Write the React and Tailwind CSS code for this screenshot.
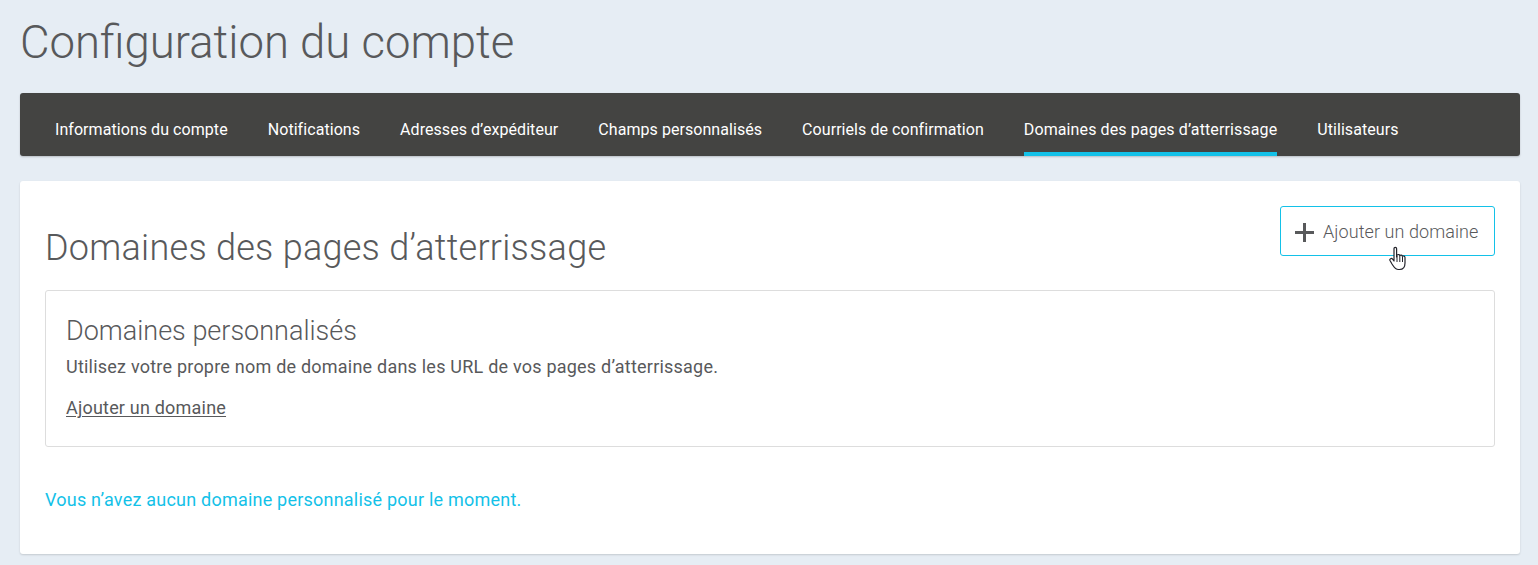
import React from "react";

const tabs = [
  "Informations du compte",
  "Notifications",
  "Adresses d’expéditeur",
  "Champs personnalisés",
  "Courriels de confirmation",
  "Domaines des pages d’atterrissage",
  "Utilisateurs",
];
const active = "Domaines des pages d’atterrissage";

export default function App() {
  return (
    <div className="h-[565px] overflow-hidden bg-[#e6edf4] pr-[18px] pl-5 font-['Roboto',sans-serif] text-[#58595b]">
      <h1 className="h-[93px] pt-[16px] text-[45.500px] leading-[54px] font-light">Configuration du compte</h1>
      <nav className="flex h-[63px] gap-[40px] rounded-[3px] bg-[#444442] px-[35px] shadow-[0_1px_2px_rgba(0,0,0,0.2)]">
        {tabs.map((t) => (
          <a
            key={t}
            className={
              "block h-[63px] pt-[27px] text-[16px] leading-[20px] whitespace-nowrap text-white " +
              (t === active ? "border-b-[4px] border-[#13c1e8] tracking-[0.11px]" : "tracking-[0.06px]")
            }
          >
            {t}
          </a>
        ))}
      </nav>
      <main className="mt-[25px] h-[373px] rounded-[3px] bg-white px-[25px] pt-[25px] shadow-[0_1px_2px_rgba(0,0,0,0.15)]">
        <div className="flex h-[84px] items-start justify-between">
          <h2 className="pt-[22px] text-[36px] leading-[40px] font-light tracking-[0.27px]">Domaines des pages d’atterrissage</h2>
          <button className="relative flex h-[50px] w-[215px] items-center rounded-[3px] border border-[#13c1e8] bg-white pl-[14px] text-[18px] font-light tracking-[0.08px] text-[#58595b]">
            <svg width="19" height="19" viewBox="0 0 19 19" className="mt-[3px] mr-[9px]">
              <path d="M9.500 0v19M0 9.500h19" stroke="#58595b" strokeWidth="3" fill="none" />
            </svg>
            <span className="pt-[1px]">Ajouter un domaine</span>
            <svg width="18" height="25" viewBox="0 0 18 25" className="absolute top-[39px] left-[108px]">
              <path
                d="M5 2.5c0-1.6 2.6-1.6 2.6 0V11l.4-2c1.4-.9 2.6-.5 2.8.6.9-.8 2.4-.5 2.6.7 1-.6 2.5-.2 2.6 1.2v5.5c0 3.5-1.6 6.5-5.5 6.5H9.5C6 23.500 5 21 3 18l-2-3.500c-.8-1.600 1.500-2.800 2.600-1.300L5 15V2.500z"
                fill="#fff"
                stroke="#23232b"
                strokeWidth="1.200"
                strokeLinejoin="round"
              />
              <path d="M8 10v6M10.800 10v6M13.500 11v5" stroke="#23232b" strokeWidth="1" fill="none" />
            </svg>
          </button>
        </div>
        <section className="h-[157px] rounded-[3px] border border-[#dddddd] px-5 pt-[25px]">
          <h3 className="text-[27px] leading-[30px] font-light">Domaines personnalisés</h3>
          <p className="mt-[10px] text-[18px] leading-[22px] tracking-[0.22px]">Utilisez votre propre nom de domaine dans les URL de vos pages d’atterrissage.</p>
          <a className="mt-[19px] block text-[18px] leading-[22px] tracking-[0.2px] underline underline-offset-2">Ajouter un domaine</a>
        </section>
        <p className="mt-[41px] text-[18px] leading-[24px] tracking-[0.22px] text-[#13c1e8]">Vous n’avez aucun domaine personnalisé pour le moment.</p>
      </main>
    </div>
  );
}
